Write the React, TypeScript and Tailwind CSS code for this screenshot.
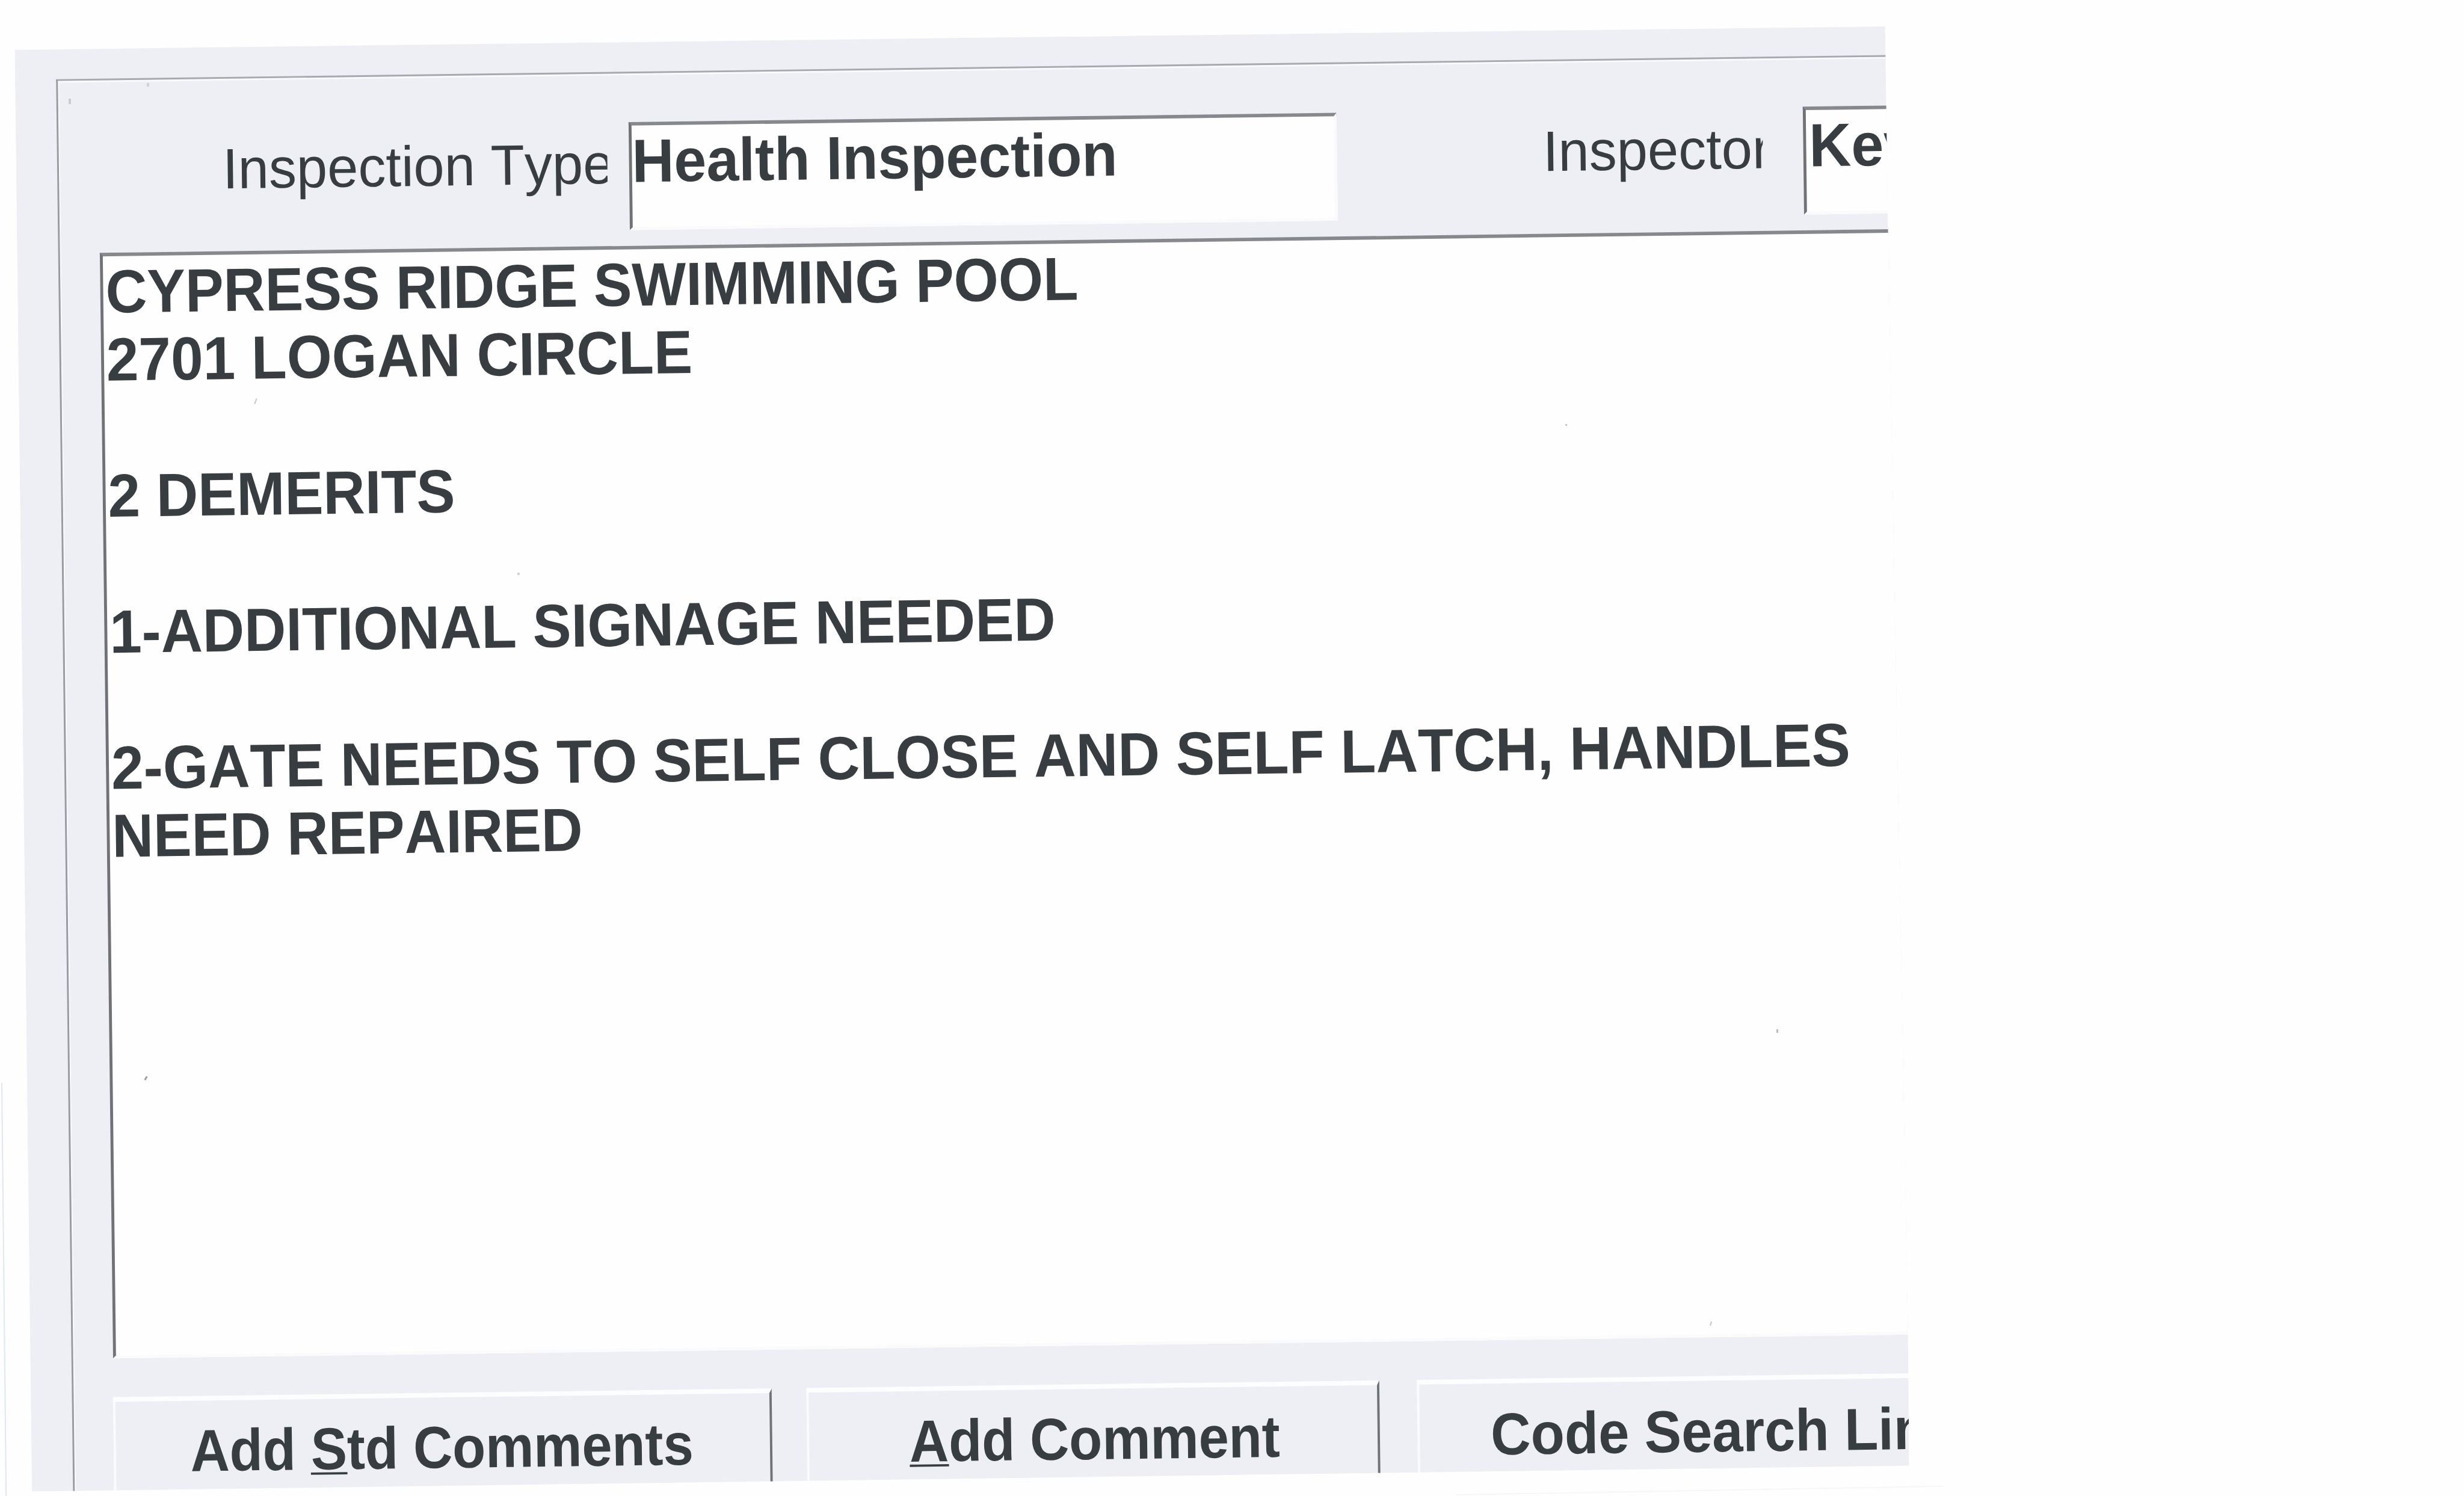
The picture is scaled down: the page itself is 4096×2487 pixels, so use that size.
import type { ReactNode } from "react";

const comments = [
  { text: "CYPRESS RIDGE SWIMMING POOL", width: "scale-x-[0.941]" },
  { text: "2701 LOGAN CIRCLE", width: "scale-x-[0.95]" },
  { text: "", width: "" },
  { text: "2 DEMERITS", width: "scale-x-[0.948]" },
  { text: "", width: "" },
  { text: "1-ADDITIONAL SIGNAGE NEEDED", width: "scale-x-[0.946]" },
  { text: "", width: "" },
  { text: "2-GATE NEEDS TO SELF CLOSE AND SELF LATCH, HANDLES", width: "scale-x-[0.952]" },
  { text: "NEED REPAIRED", width: "scale-x-[0.938]" },
];

// Dust marks on the paper
const specks = [
  "top-[164px] left-[114px] h-[9px] w-[4px] bg-[#c9cbd1]",
  "top-[138px] left-[244px] h-[6px] w-[4px] bg-[#cfd1d6]",
  "top-[662px] left-[424px] h-[10px] w-[2px] rotate-[20deg] bg-[#c6c9cc]",
  "top-[952px] left-[860px] h-[4px] w-[4px] bg-[#d3d5d8]",
  "top-[705px] left-[2602px] h-[3px] w-[3px] bg-[#c6c9cc]",
  "top-[1711px] left-[2953px] h-[6px] w-[3px] bg-[#b9bcc2]",
  "top-[1789px] left-[241px] h-[7px] w-[3px] rotate-[30deg] bg-[#9c9fa5]",
  "top-[2197px] left-[2843px] h-[7px] w-[2px] rotate-[15deg] bg-[#c3c6ca]",
];

const Label = ({ className, children }: { className: string; children: ReactNode }) => (
  <div className={`mt-[13px] shrink-0 overflow-hidden ${className}`}>
    <span className="block origin-left scale-x-[0.974] text-[97px] leading-[116px] whitespace-nowrap">
      {children}
    </span>
  </div>
);

const Field = ({ className, children }: { className: string; children: ReactNode }) => (
  <div
    className={`h-[184px] shrink-0 border-t-[6px] border-r-[5px] border-b-[5px] border-l-[5px] border-t-[#85888d] border-r-[#fafafc] border-b-[#fbfbfc] border-l-[#6f7277] bg-[#fefefe] pt-[2px] ${className}`}
  >
    <span className="block origin-left scale-x-[0.955] text-[104px] leading-[116px] font-bold whitespace-nowrap">
      {children}
    </span>
  </div>
);

const FormButton = ({ className, children }: { className: string; children: ReactNode }) => (
  <button
    type="button"
    className={`flex h-[180px] shrink-0 items-start border-t-[8px] border-l-[4px] border-t-[#fdfdfe] border-l-[#fbfbfd] pt-[35px] text-[101px] leading-[101px] font-bold whitespace-nowrap ${className}`}
  >
    {children}
  </button>
);

// Access key letter with its underline
const Key = ({ children }: { children: ReactNode }) => (
  <span className="relative">
    {children}
    <span className="absolute inset-x-0 bottom-[12px] h-[4px] bg-[#383d41]" />
  </span>
);

export default function App() {
  return (
    <div className="relative h-[2487px] w-[4096px] overflow-hidden bg-[#fefefe]">
      <div className="h-[2550px] w-[4200px] origin-top-left scale-[0.975] font-['Liberation_Sans',Arial,sans-serif] text-[#383d41] [font-kerning:none]">
        <div className="h-[2550px] w-[4200px] pt-[84px] pl-[25px] [clip-path:polygon(25px_85px,3214px_45px,3219px_393px,3253px_2275px,3255px_2499px,54px_2543px)]">
          <div className="h-[2480px] w-[3400px] origin-top-left [transform:matrix(1,-0.0132,0.012,1,0,0)] bg-[#eeeff4] pt-[52px] pl-[70px]">
            <div className="h-[2428px] w-[3330px] border-t-[3px] border-l-[3px] border-t-[#a6a9af] border-l-[#989ba2] shadow-[inset_2px_3px_0_#fafafc]">
              <div className="flex pt-[83px] pl-[279px]">
                <Label className="w-[656px]">Inspection Type</Label>
                <Field className="ml-[37px] w-[1207px]">Health Inspection</Field>
                <Label className="ml-[351px] w-[375px]">Inspector</Label>
                <Field className="ml-[69px] w-[300px] pl-[5px]">Kev</Field>
              </div>

              <div className="mt-[27px] ml-[68px] h-[1885px] border-t-[6px] border-b-[5px] border-l-[5px] border-t-[#85888d] border-b-[#fbfbfc] border-l-[#6f7277] bg-[#fefefe] pt-[2px] pl-[4px]">
                {comments.map((line, idx) => (
                  <p
                    key={idx}
                    className={`h-[116px] w-fit origin-left text-[104px] leading-[116px] font-bold whitespace-nowrap ${line.width}`}
                  >
                    {line.text}
                  </p>
                ))}
              </div>

              <div className="mt-[66px] ml-[67px] flex">
                <FormButton className="w-[1123px] border-r-[4px] border-r-[#6f7277] pl-[127px]">
                  <span className="origin-left scale-x-[0.915]">
                    Add <Key>S</Key>td Comments
                  </span>
                </FormButton>
                <FormButton className="ml-[59px] w-[977px] border-r-[4px] border-r-[#6f7277] pl-[171px]">
                  <span className="origin-left scale-x-[0.915]">
                    <Key>A</Key>dd Comment
                  </span>
                </FormButton>
                <FormButton className="ml-[64px] w-[1000px] pl-[121px]">
                  <span className="mt-[1px] origin-left scale-x-[0.934]">Code Search Link</span>
                </FormButton>
              </div>
            </div>
          </div>
        </div>
      </div>

      {specks.map((speck) => (
        <div key={speck} className={`absolute ${speck}`} aria-hidden />
      ))}

      {/* faint paper edges */}
      <div className="absolute top-[1800px] left-[2px] h-[687px] w-[2px] origin-top -rotate-[0.6deg] bg-[#dde8f1]" />
      <div className="absolute top-[2484px] left-[2420px] h-[2px] w-[810px] origin-left -rotate-[1deg] bg-[#f3f6fa]" />
    </div>
  );
}
